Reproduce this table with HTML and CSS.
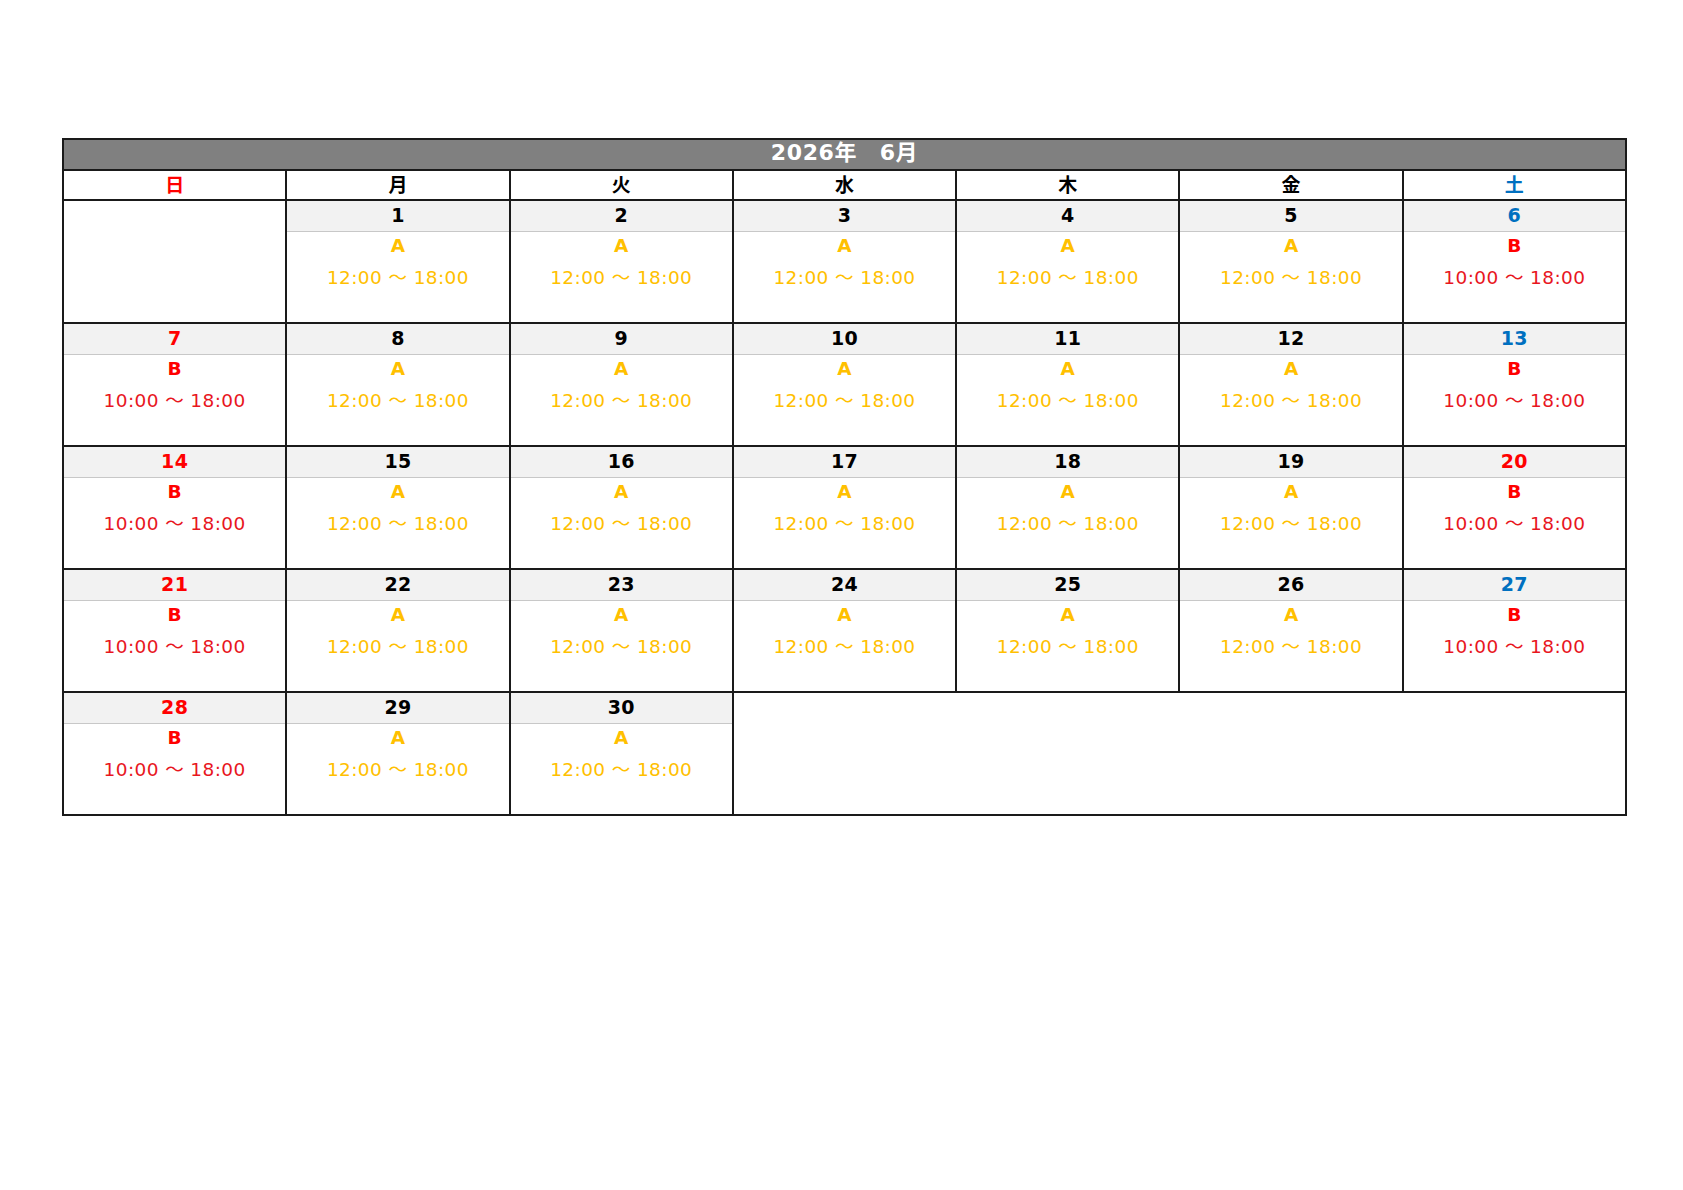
FILE: index.html
```html
<!DOCTYPE html>
<html lang="ja">
<head>
<meta charset="utf-8">
<title>2026年 6月</title>
<link rel="stylesheet" href="styles.css">
</head>
<body>
<div class="sheet">
  <div class="cal">
    <div class="title">2026年　6月</div>

    <div class="dow sun">日</div>
    <div class="dow">月</div>
    <div class="dow">火</div>
    <div class="dow">水</div>
    <div class="dow">木</div>
    <div class="dow">金</div>
    <div class="dow sat">土</div>

    <div class="day empty"></div>
    <div class="day"><div class="num">1</div><div class="shift a">A</div><div class="time a">12:00 ～ 18:00</div></div>
    <div class="day"><div class="num">2</div><div class="shift a">A</div><div class="time a">12:00 ～ 18:00</div></div>
    <div class="day"><div class="num">3</div><div class="shift a">A</div><div class="time a">12:00 ～ 18:00</div></div>
    <div class="day"><div class="num">4</div><div class="shift a">A</div><div class="time a">12:00 ～ 18:00</div></div>
    <div class="day"><div class="num">5</div><div class="shift a">A</div><div class="time a">12:00 ～ 18:00</div></div>
    <div class="day"><div class="num sat">6</div><div class="shift b">B</div><div class="time b">10:00 ～ 18:00</div></div>

    <div class="day"><div class="num sun">7</div><div class="shift b">B</div><div class="time b">10:00 ～ 18:00</div></div>
    <div class="day"><div class="num">8</div><div class="shift a">A</div><div class="time a">12:00 ～ 18:00</div></div>
    <div class="day"><div class="num">9</div><div class="shift a">A</div><div class="time a">12:00 ～ 18:00</div></div>
    <div class="day"><div class="num">10</div><div class="shift a">A</div><div class="time a">12:00 ～ 18:00</div></div>
    <div class="day"><div class="num">11</div><div class="shift a">A</div><div class="time a">12:00 ～ 18:00</div></div>
    <div class="day"><div class="num">12</div><div class="shift a">A</div><div class="time a">12:00 ～ 18:00</div></div>
    <div class="day"><div class="num sat">13</div><div class="shift b">B</div><div class="time b">10:00 ～ 18:00</div></div>

    <div class="day"><div class="num sun">14</div><div class="shift b">B</div><div class="time b">10:00 ～ 18:00</div></div>
    <div class="day"><div class="num">15</div><div class="shift a">A</div><div class="time a">12:00 ～ 18:00</div></div>
    <div class="day"><div class="num">16</div><div class="shift a">A</div><div class="time a">12:00 ～ 18:00</div></div>
    <div class="day"><div class="num">17</div><div class="shift a">A</div><div class="time a">12:00 ～ 18:00</div></div>
    <div class="day"><div class="num">18</div><div class="shift a">A</div><div class="time a">12:00 ～ 18:00</div></div>
    <div class="day"><div class="num">19</div><div class="shift a">A</div><div class="time a">12:00 ～ 18:00</div></div>
    <div class="day"><div class="num sun">20</div><div class="shift b">B</div><div class="time b">10:00 ～ 18:00</div></div>

    <div class="day"><div class="num sun">21</div><div class="shift b">B</div><div class="time b">10:00 ～ 18:00</div></div>
    <div class="day"><div class="num">22</div><div class="shift a">A</div><div class="time a">12:00 ～ 18:00</div></div>
    <div class="day"><div class="num">23</div><div class="shift a">A</div><div class="time a">12:00 ～ 18:00</div></div>
    <div class="day"><div class="num">24</div><div class="shift a">A</div><div class="time a">12:00 ～ 18:00</div></div>
    <div class="day"><div class="num">25</div><div class="shift a">A</div><div class="time a">12:00 ～ 18:00</div></div>
    <div class="day"><div class="num">26</div><div class="shift a">A</div><div class="time a">12:00 ～ 18:00</div></div>
    <div class="day"><div class="num sat">27</div><div class="shift b">B</div><div class="time b">10:00 ～ 18:00</div></div>

    <div class="day"><div class="num sun">28</div><div class="shift b">B</div><div class="time b">10:00 ～ 18:00</div></div>
    <div class="day"><div class="num">29</div><div class="shift a">A</div><div class="time a">12:00 ～ 18:00</div></div>
    <div class="day"><div class="num">30</div><div class="shift a">A</div><div class="time a">12:00 ～ 18:00</div></div>
    <div class="day empty rest"></div>
  </div>
</div>
</body>
</html>
```

FILE: styles.css
```css
html, body {
  margin: 0;
  padding: 0;
  background: #ffffff;
}

body {
  font-family: "DejaVu Sans", "Noto Sans CJK JP", sans-serif;
  color: #000000;
}

.sheet {
  padding: 138px 0 0 62px;
}

.cal {
  width: 1565px;
  box-sizing: border-box;
  border-top: 2px solid #1a1a1a;
  border-left: 2px solid #1a1a1a;
  display: grid;
  grid-template-columns: repeat(7, 1fr);
  grid-template-rows: 31px 30px repeat(5, 123px);
}

.cal > div {
  box-sizing: border-box;
  border-right: 2px solid #1a1a1a;
  border-bottom: 2px solid #1a1a1a;
  min-width: 0;
}

.title {
  grid-column: 1 / -1;
  background: #808080;
  color: #ffffff;
  font-weight: bold;
  font-size: 22px;
  line-height: 26px;
  letter-spacing: 0.6px;
  text-align: center;
}

.dow {
  font-weight: bold;
  font-size: 19px;
  line-height: 28px;
  text-align: center;
}

.day {
  display: flex;
  flex-direction: column;
  text-align: center;
}

.num {
  height: 30px;
  background: #f2f2f2;
  border-bottom: 1px solid #c8c8c8;
  font-weight: bold;
  font-size: 19px;
  line-height: 28px;
  letter-spacing: 0.3px;
}

.shift {
  font-weight: bold;
  font-size: 18.5px;
  line-height: 28px;
}

.time {
  font-size: 18.5px;
  line-height: 35px;
  letter-spacing: 0.4px;
}

.rest {
  grid-column: 4 / 8;
}

.sun { color: #ff0000; }
.sat { color: #0070c0; }
.a { color: #ffc000; }
.b { color: #ff0000; }
.time.b { color: #e8161e; }
.time.a { color: #ffc000; }
```
